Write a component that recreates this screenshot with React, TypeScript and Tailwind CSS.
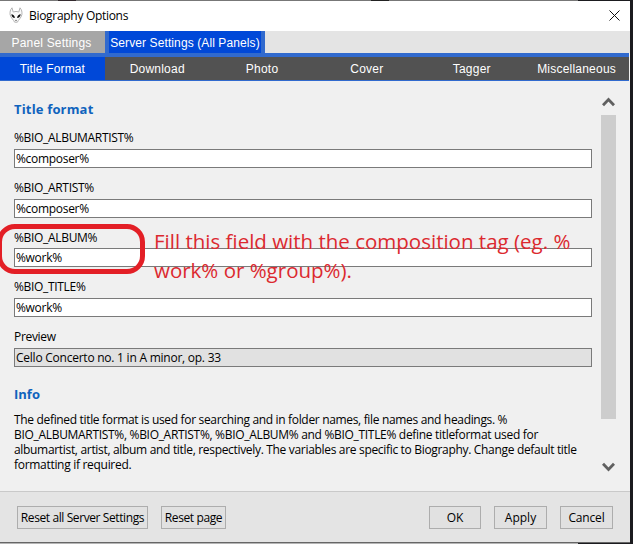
import React from "react";

const tabs = ["Title Format", "Download", "Photo", "Cover", "Tagger", "Miscellaneous"];

function Field({ label, value, className = "", labelClass = "leading-[16px]", valueClass = "tracking-[-0.3px]", fill = "bg-white" }: {
  label: string; value: string; className?: string; labelClass?: string; valueClass?: string; fill?: string;
}) {
  return (
    <div className={`flex flex-col ${className}`}>
      <div className={`h-[18px] tracking-[-0.32px] ${labelClass}`}>{label}</div>
      <div className={`mt-px h-[19px] w-[578px] border border-[#7a7a7a] pl-px leading-[17px] ${fill}`}>
        <span className={valueClass}>{value}</span>
      </div>
    </div>
  );
}

function Button({ children, className, textClass = "" }: { children: React.ReactNode; className: string; textClass?: string }) {
  return (
    <button className={`flex h-[23px] items-center justify-center border border-[#adadad] bg-[#e1e1e1] whitespace-nowrap ${className}`}>
      <span className={textClass}>{children}</span>
    </button>
  );
}

function Chevron({ down = false }: { down?: boolean }) {
  return (
    <svg width="13" height="10" viewBox="0 0 13 10" fill="none" className={down ? "rotate-180" : ""}>
      <path d="M1 8.3 6.5 2.5 12 8.3" stroke="#606060" strokeWidth="2.8" />
    </svg>
  );
}

export default function App() {
  return (
    <div className="relative flex h-[544px] w-[633px] flex-col overflow-hidden bg-[#1b1b1f] font-['Open_Sans','Noto_Sans',sans-serif] text-[12px] text-black">
      <div className="flex h-px shrink-0">
        <div className="w-[58px] bg-[#777]" />
        <div className="w-[18px] bg-[#332a2e]" />
        <div className="w-[295px] bg-[#777]" />
        <div className="w-[18px] bg-[#222]" />
        <div className="w-[189px] bg-[#777]" />
      </div>
      <div className="flex h-[541px] w-[630px] shrink-0 flex-col bg-[#f0f0f0]">
        <header className="flex h-[30px] shrink-0 items-center bg-white pl-[9px] pr-[10px]">
          <svg width="14" height="16" viewBox="0 0 14 16" fill="none" className="mb-[2px]">
            <path d="M3 .8C1.2 2.8.8 5 1.1 7.6 1.8 11 4.8 13 5.6 15.2H8.4C9.2 13 12.2 11 12.9 7.6 13.2 5 12.8 2.8 11 .8L9.8 5Q7 3.8 4.2 5Z" fill="#fafafa" stroke="#b4b4b4" strokeWidth="1" />
            <path d="M2.3 7.2C4 7.2 5.6 8.4 5.9 11 3.8 10.8 2.6 9.4 2.3 7.2ZM11.7 7.2C10 7.2 8.4 8.4 8.1 11 10.2 10.8 11.4 9.4 11.7 7.2Z" fill="#0c0c0c" />
            <path d="M6 13.4h2" stroke="#888" />
          </svg>
          <span className="ml-[6px] text-[12px] tracking-[-0.3px]">Biography Options</span>
          <svg width="11" height="11" viewBox="0 0 11 11" className="mb-[2px] ml-auto" fill="none" stroke="#111">
            <path d="M.5.5l10 10M10.5.5l-10 10" />
          </svg>
        </header>
        <nav className="flex h-[22px] shrink-0 bg-[#e4e4e4] font-['Liberation_Sans',Arial,sans-serif] text-[12px] text-white">
          <div className="flex w-[105px] items-center justify-center bg-[#a6a6a6] pt-[2px] pr-[2px]"><span className="tracking-[0.18px]">Panel Settings</span></div>
          <div className="flex w-[160px] bg-[#316ace] px-1">
            <div className="flex flex-1 items-center justify-center whitespace-nowrap bg-[#0048d8] pt-[2px]"><span className="tracking-[0.1px]">Server Settings (All Panels)</span></div>
          </div>
        </nav>
        <div className="h-1 w-[629px] shrink-0 bg-[#316ace]" />
        <nav className="grid h-6 w-[629px] shrink-0 grid-cols-6 border-b border-[#316ace] bg-[#525252] font-['Liberation_Sans',Arial,sans-serif] text-[12px] text-white">
          {tabs.map((t, i) => (
            <div key={t} className={`flex items-center justify-center ${i === 0 ? "bg-[#0048d8]" : ""}`}>
              <span className={i === 0 ? "tracking-[0.15px]" : "tracking-[0.22px]"}>{t}</span>
            </div>
          ))}
        </nav>
        <main className="flex h-[410px] shrink-0">
          <section className="flex w-[601px] flex-col pl-[14px] pt-[18px]">
            <h2 className="h-5 text-[13px] font-bold leading-5 tracking-[0.17px] text-[#0f63bd]">Title format</h2>
            <Field className="mt-[11px]" label="%BIO_ALBUMARTIST%" value="%composer%" />
            <Field className="mt-[12px]" label="%BIO_ARTIST%" value="%composer%" />
            <Field className="mt-[11px]" label="%BIO_ALBUM%" value="%work%" labelClass="leading-[18px]" />
            <Field className="mt-[12px]" label="%BIO_TITLE%" value="%work%" />
            <Field className="mt-[12px]" label="Preview" value="Cello Concerto no. 1 in A minor, op. 33" valueClass="tracking-[-0.24px]" fill="bg-[#e1e1e1]" />
            <h2 className="mt-[17px] h-5 text-[13px] font-bold leading-5 text-[#0f63bd]">Info</h2>
            <div className="mt-[8px] flex flex-col whitespace-nowrap leading-[15px]">
              <span className="tracking-[-0.33px]">The defined title format is used for searching and in folder names, file names and headings. %</span>
              <span className="tracking-[-0.31px]">BIO_ALBUMARTIST%, %BIO_ARTIST%, %BIO_ALBUM% and %BIO_TITLE% define titleformat used for</span>
              <span className="tracking-[-0.32px]">albumartist, artist, album and title, respectively. The variables are specific to Biography. Change default title</span>
              <span className="tracking-[-0.3px]">formatting if required.</span>
            </div>
          </section>
          <aside className="flex w-[15px] flex-col items-center pt-4">
            <Chevron />
            <div className="mt-2 h-[304px] w-[15px] bg-[#cdcdcd]" />
            <div className="mt-[43px]"><Chevron down /></div>
          </aside>
        </main>
        <footer className="flex flex-1 items-start border-t border-[#c9c9c9] bg-[#e4e4e4] pl-[17px] pt-[14px]">
          <Button className="w-[131px]" textClass="tracking-[-0.4px]">Reset all Server Settings</Button>
          <Button className="ml-[13px] w-[65px]" textClass="tracking-[-0.4px]">Reset page</Button>
          <Button className="ml-[203px] w-[52px]">OK</Button>
          <Button className="ml-[13px] w-[53px]">Apply</Button>
          <Button className="ml-[13px] w-[53px]" textClass="tracking-[-0.15px]">Cancel</Button>
        </footer>
      </div>
      <div className="h-px w-[630px] shrink-0 bg-[#666]" />
      <div className="h-px w-[578px] shrink-0 bg-[#b5b5b5]" />
      <div className="absolute left-[-3px] top-[224px] h-[50px] w-[148px] rounded-[18px] border-[5px] border-[#e31f26]" />
      <div className="absolute left-[154px] top-[227px] flex flex-col whitespace-nowrap text-[20.5px] leading-[29px] text-[#dc292f]">
        <span>Fill this field with the composition tag (eg. %</span>
        <span>work% or %group%).</span>
      </div>
    </div>
  );
}
